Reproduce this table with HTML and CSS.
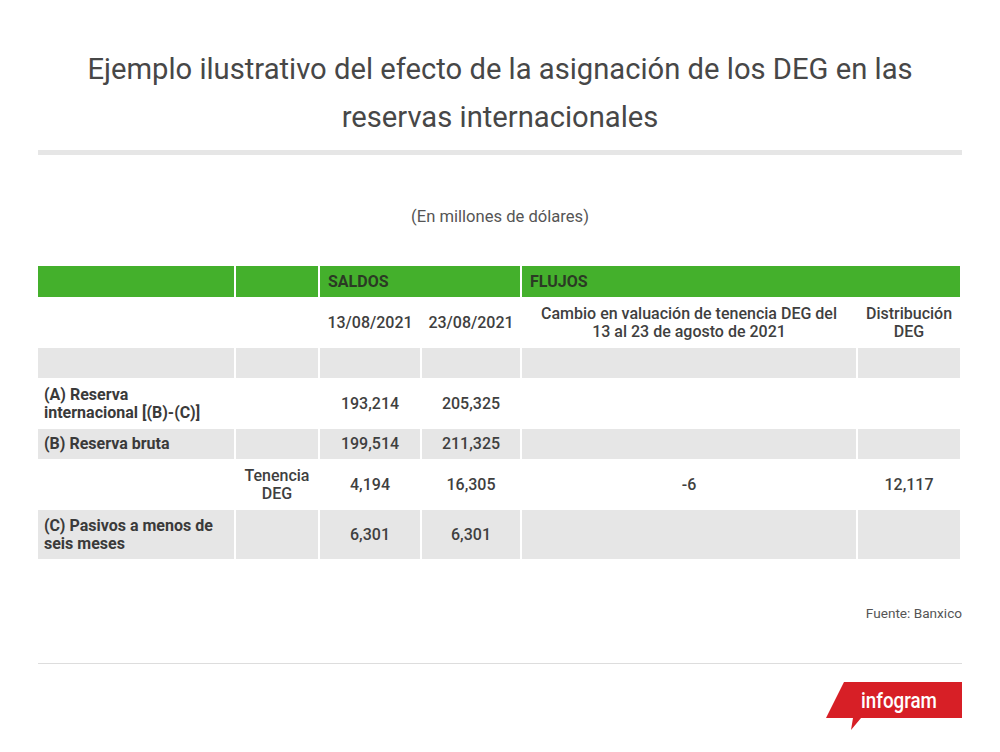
FILE: index.html
```html
<!DOCTYPE html>
<html lang="es">
<head>
<meta charset="utf-8">
<title>Ejemplo ilustrativo</title>
<link rel="stylesheet" href="styles.css">
</head>
<body>
<div class="page">
  <h1 class="title">Ejemplo ilustrativo del efecto de la asignación de los DEG en las reservas internacionales</h1>
  <div class="rule"></div>
  <p class="subtitle">(En millones de dólares)</p>

  <div class="grid">
    <div class="c hd"></div>
    <div class="c hd"></div>
    <div class="c hd span2 lefttxt">SALDOS</div>
    <div class="c hd span2 lefttxt">FLUJOS</div>

    <div class="c tall"></div>
    <div class="c tall"></div>
    <div class="c tall">13/08/2021</div>
    <div class="c tall">23/08/2021</div>
    <div class="c tall">Cambio en valuación de tenencia DEG del<br>13 al 23 de agosto de 2021</div>
    <div class="c tall">Distribución<br>DEG</div>

    <div class="c gray short"></div>
    <div class="c gray short"></div>
    <div class="c gray short"></div>
    <div class="c gray short"></div>
    <div class="c gray short"></div>
    <div class="c gray short"></div>

    <div class="c tall label">(A) Reserva<br>internacional [(B)-(C)]</div>
    <div class="c tall"></div>
    <div class="c tall">193,214</div>
    <div class="c tall">205,325</div>
    <div class="c tall"></div>
    <div class="c tall"></div>

    <div class="c gray short label">(B) Reserva bruta</div>
    <div class="c gray short"></div>
    <div class="c gray short">199,514</div>
    <div class="c gray short">211,325</div>
    <div class="c gray short"></div>
    <div class="c gray short"></div>

    <div class="c tall"></div>
    <div class="c tall">Tenencia<br>DEG</div>
    <div class="c tall">4,194</div>
    <div class="c tall">16,305</div>
    <div class="c tall">-6</div>
    <div class="c tall">12,117</div>

    <div class="c gray tall label">(C) Pasivos a menos de<br>seis meses</div>
    <div class="c gray tall"></div>
    <div class="c gray tall">6,301</div>
    <div class="c gray tall">6,301</div>
    <div class="c gray tall"></div>
    <div class="c gray tall"></div>
  </div>

  <p class="source">Fuente: Banxico</p>
  <div class="bottomline"></div>
  <div class="logo-row">
    <svg class="logo" width="140" height="50" viewBox="0 0 140 50" aria-label="infogram">
      <polygon points="21,0 139,0 139,36 38,36 28,48 30,36 3,36" fill="#d71f26"/>
      <text x="38" y="26" textLength="76" lengthAdjust="spacingAndGlyphs" class="logo-text">infogram</text>
    </svg>
  </div>
</div>
</body>
</html>
```

FILE: styles.css
```css
html, body {
  margin: 0;
  padding: 0;
  background: #ffffff;
}
body {
  font-family: Roboto, "Open Sans", "Liberation Sans", sans-serif;
  color: #444444;
}
.page {
  width: 924px;
  margin: 0 auto;
  padding-top: 45px;
}
.title {
  margin: 0;
  font-size: 29.2px;
  font-weight: 400;
  line-height: 48px;
  text-align: center;
  color: #474747;
  padding: 0 30px;
}
.rule {
  height: 5px;
  background: #e6e6e6;
  margin-top: 9px;
}
.subtitle {
  margin: 52px 0 0;
  font-size: 16.6px;
  line-height: 20px;
  text-align: center;
  color: #555555;
}
.grid {
  margin-top: 39px;
  width: 922px;
  display: grid;
  grid-template-columns: 196px 82px 100px 98px 334px 102px;
  column-gap: 2px;
  row-gap: 1px;
  font-size: 16px;
  color: #3f3f3f;
}
.c {
  display: flex;
  align-items: center;
  justify-content: center;
  text-align: center;
  line-height: 18px;
  box-sizing: border-box;
  font-weight: 500;
}
.hd {
  background: #44b02c;
  height: 31px;
  font-weight: 700;
  color: #2b3a24;
  font-size: 16px;
}
.span2 {
  grid-column: span 2;
}
.lefttxt {
  justify-content: flex-start;
  padding-left: 8px;
}
.tall {
  height: 49px;
}
.short {
  height: 30px;
}
.gray {
  background: #e6e6e6;
}
.label {
  justify-content: flex-start;
  text-align: left;
  font-weight: 700;
  padding-left: 6px;
  color: #3a3a3a;
}
.source {
  margin: 46px 0 0;
  text-align: right;
  font-size: 13.6px;
  line-height: 16px;
  color: #555555;
}
.bottomline {
  height: 1px;
  background: #dddddd;
  margin-top: 42px;
}
.logo-row {
  display: flex;
  justify-content: flex-end;
  margin-top: 18px;
}
.logo {
  display: block;
  margin-right: -1px;
}
.logo-text {
  fill: #ffffff;
  font-family: Roboto, "Liberation Sans", sans-serif;
  font-size: 22px;
  font-weight: 500;
}
```
